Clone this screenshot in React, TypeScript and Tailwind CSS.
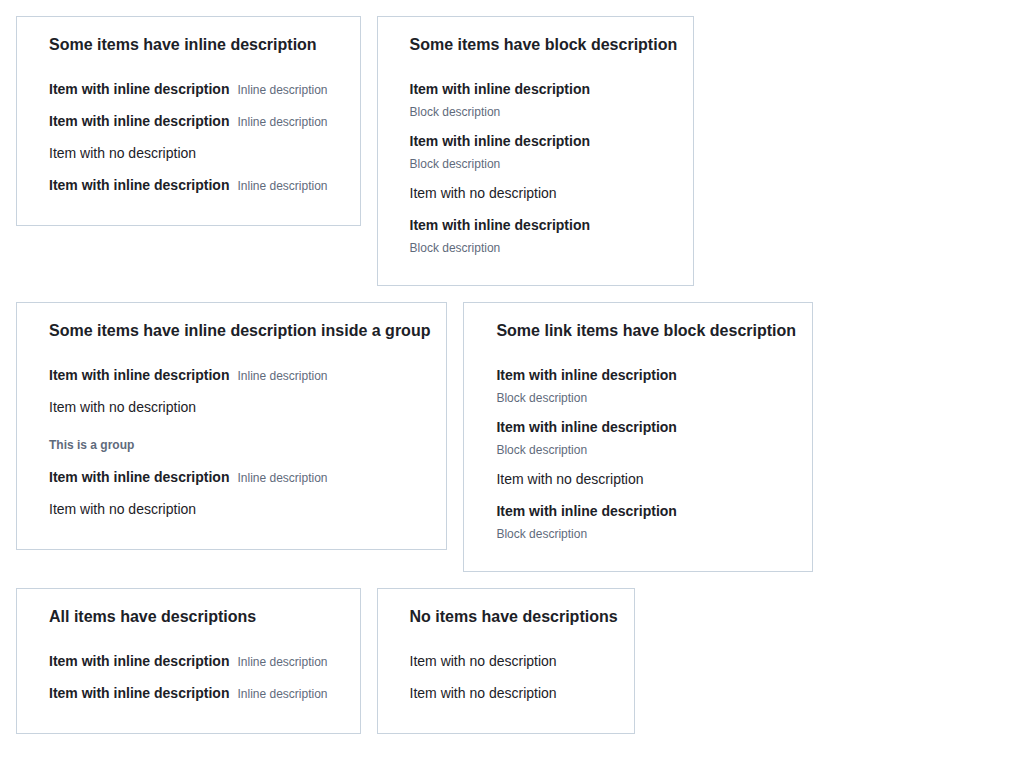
import React from 'react';

type Item = { label: string; desc?: string; group?: undefined } | { group: string };

interface CardProps {
    title: string;
    items: Item[];
    block?: boolean;
}

const Card: React.FC<CardProps> = ({ title, items, block }) => {
    return (
        <div className="border border-[#c8d3de] bg-white pt-4 pb-6 pl-8 pr-4">
            <h2 className="text-base leading-6 font-bold text-[#1c2127] whitespace-nowrap">{title}</h2>
            <ul className="mt-4">
                {items.map((item, i) => {
                    if ('group' in item && item.group) {
                        return (
                            <li key={i} className="pt-3 pb-1.5 text-xs leading-5 font-bold text-[#5f6b7c]">
                                {item.group}
                            </li>
                        );
                    }
                    const it = item as { label: string; desc?: string };
                    if (!it.desc) {
                        return (
                            <li key={i} className="py-1.5 text-sm leading-5 text-[#1c2127] whitespace-nowrap pr-4">
                                {it.label}
                            </li>
                        );
                    }
                    if (block) {
                        return (
                            <li key={i} className="pt-1.5 pb-[5px] whitespace-nowrap pr-4">
                                <div className="text-sm leading-5 font-bold text-[#1c2127]">{it.label}</div>
                                <div className="mt-[5px] text-xs leading-4 text-[#5f6b7c]">{it.desc}</div>
                            </li>
                        );
                    }
                    return (
                        <li key={i} className="py-1.5 flex items-baseline gap-2 whitespace-nowrap pr-4">
                            <span className="text-sm leading-5 font-bold text-[#1c2127]">{it.label}</span>
                            <span className="text-xs leading-4 text-[#5f6b7c]">{it.desc}</span>
                        </li>
                    );
                })}
            </ul>
        </div>
    );
};

const withInline = { label: 'Item with inline description', desc: 'Inline description' };
const withBlock = { label: 'Item with inline description', desc: 'Block description' };
const noDesc = { label: 'Item with no description' };

export default function App() {
    return (
        <div
            className="min-h-screen bg-white p-4 flex flex-wrap content-start items-start gap-4"
            style={{ fontFamily: '"Liberation Sans", Arial, sans-serif' }}
        >
            <Card title="Some items have inline description" items={[withInline, withInline, noDesc, withInline]} />
            <Card title="Some items have block description" block items={[withBlock, withBlock, noDesc, withBlock]} />
            <Card
                title="Some items have inline description inside a group"
                items={[withInline, noDesc, { group: 'This is a group' }, withInline, noDesc]}
            />
            <Card title="Some link items have block description" block items={[withBlock, withBlock, noDesc, withBlock]} />
            <Card title="All items have descriptions" items={[withInline, withInline]} />
            <Card title="No items have descriptions" items={[noDesc, noDesc]} />
        </div>
    );
}
